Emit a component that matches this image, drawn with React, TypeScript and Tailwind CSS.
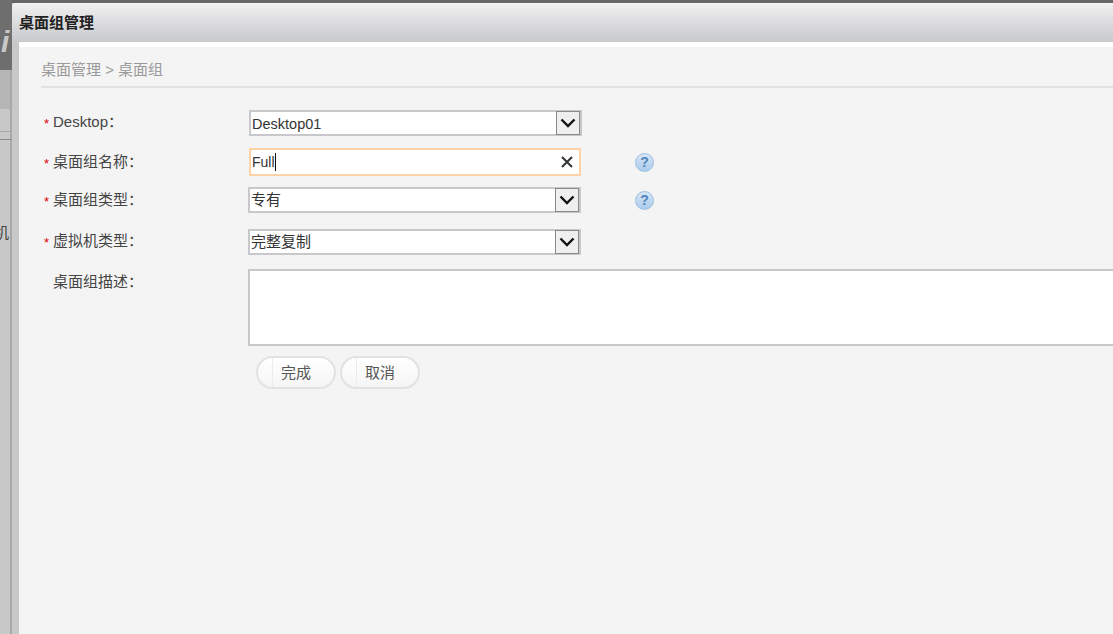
import { ReactNode } from "react";

const FONT = { fontFamily: '"Liberation Sans", "Noto Sans CJK SC", sans-serif' };

function Label({ text, required = true, low }: { text: string; required?: boolean; low?: boolean }) {
  return (
    <div className={`flex w-[205px] shrink-0 items-center text-[15px] leading-[20px] text-[#444] ${low ? "" : "pb-[2px]"}`}>
      <span className="w-[9px] pt-[3px] text-[13px] text-[#e00000]">{required ? "*" : ""}</span>
      <span>{text}</span>
    </div>
  );
}

function Select({ value, w, latin }: { value: string; w: string; latin?: boolean }) {
  return (
    <div className={`flex h-[26px] items-center justify-between border-2 border-[#c8c8cc] bg-white ${w}`}>
      <span className={`pl-[1px] text-[#333] ${latin ? "pt-[3px] text-[14.5px]" : "pt-[1px] text-[15px]"}`}>{value}</span>
      <span className="flex h-[24px] w-[24px] items-center justify-center border border-[#8a8a8a] bg-[#efefef]">
        <svg width="16" height="10" viewBox="0 0 16 10" fill="none">
          <path d="M1.5 1.5 L8 8 L14.5 1.5" stroke="#111" strokeWidth="2.4" />
        </svg>
      </span>
    </div>
  );
}

function Help() {
  return (
    <span className="ml-[54px] flex h-[19px] w-[19px] items-center justify-center rounded-full border border-[#9cc0e2] bg-gradient-to-b from-[#d8e6f5] to-[#a9cbeb] text-[14px] font-bold leading-none text-[#4f86bd]">
      ?
    </span>
  );
}

function Btn({ children }: { children: ReactNode }) {
  return (
    <button className="relative h-[33px] w-[80px] rounded-full border-2 border-[#e2e2e2] bg-gradient-to-b from-white to-[#f5f5f5] pt-[2px] text-[15px] text-[#555]">
      <span className="absolute inset-y-0 left-[14px] w-px bg-[#ececec]" />
      {children}
    </button>
  );
}

export default function App() {
  return (
    <div className="flex h-[634px] w-[1113px] overflow-hidden bg-[#c8c8c8]" style={FONT}>
      {/* page behind the dialog */}
      <div className="flex w-[12px] shrink-0 flex-col overflow-hidden">
        <div className="flex h-[70px] items-center bg-[#6e6e6e] pt-[14px]">
          <span className="ml-[1px] text-[30px] font-bold italic leading-none text-[#c8c8c8]">i</span>
        </div>
        <div className="h-[39px] border-r-2 border-[#a8a8a8] bg-[#b6b6b6]" />
        <div className="h-[23px] border-r-2 border-b border-[#a8a8a8] bg-[#c8c8c8]" />
        <div className="h-[8px] border-r-2 border-b border-[#a8a8a8] border-b-[#888] bg-[#c8c8c8]" />
        <div className="flex-1 border-r-2 border-[#a8a8a8] bg-[#c8c8c8] pt-[85px]">
          <span className="-ml-[6px] block text-[15px] leading-[15px] text-[#444]">机</span>
        </div>
      </div>

      {/* dialog */}
      <div className="flex min-w-0 flex-1 flex-col">
        <div className="h-[3px] bg-[#666]" />
        <div className="flex h-[39px] items-center rounded-tl-[4px] border-t border-[#f7f7f7] bg-gradient-to-b from-[#f0f0f0] to-[#c8c9cd] pl-[7px] text-[15px] font-bold text-[#222]">
          桌面组管理
        </div>
        <div className="ml-[7px] flex flex-1 flex-col bg-[#f4f4f4]">
          <div className="h-[5px] bg-white" />
          <div className="flex-1 pl-[22px]">
            <div className="flex h-[41px] items-end border-b-2 border-[#e2e2e2] pb-[6px] text-[15px] leading-[20px] text-[#9a9a9a]">
              桌面管理 &gt; 桌面组
            </div>

            <div className="flex flex-col pl-[3px]">
              <div className="mt-[22px] flex h-[26px] items-center">
                <Label text="Desktop：" />
                <Select value="Desktop01" w="w-[333px]" latin />
              </div>
              <div className="mt-[12px] flex h-[28px] items-center">
                <Label text="桌面组名称：" low />
                <div className="flex h-[28px] w-[332px] items-center justify-between border-2 border-[#fdd3a6] bg-white pr-[5px]">
                  <span className="flex items-center pl-[1px] text-[14px] text-[#333]">
                    Full<span className="h-[18px] w-px bg-[#111]" />
                  </span>
                  <svg width="14" height="14" viewBox="0 0 14 14" fill="none">
                    <path d="M2 2 L12 12 M12 2 L2 12" stroke="#333" strokeWidth="2" />
                  </svg>
                </div>
                <Help />
              </div>
              <div className="mt-[11px] flex h-[26px] items-center">
                <Label text="桌面组类型：" low />
                <Select value="专有" w="w-[333px] -ml-px" />
                <Help />
              </div>
              <div className="mt-[16px] flex h-[26px] items-center">
                <Label text="虚拟机类型：" />
                <Select value="完整复制" w="w-[333px] -ml-px" />
              </div>
              <div className="mt-[14px] flex items-start">
                <div className="pt-[3px]">
                  <Label text="桌面组描述：" required={false} />
                </div>
                <div className="-ml-px h-[77px] flex-1 border-2 border-r-0 border-[#c8c8cc] bg-white" />
              </div>
              <div className="ml-[212px] mt-[10px] flex gap-[4px]">
                <Btn>完成</Btn>
                <Btn>取消</Btn>
              </div>
            </div>
          </div>
        </div>
      </div>
    </div>
  );
}
